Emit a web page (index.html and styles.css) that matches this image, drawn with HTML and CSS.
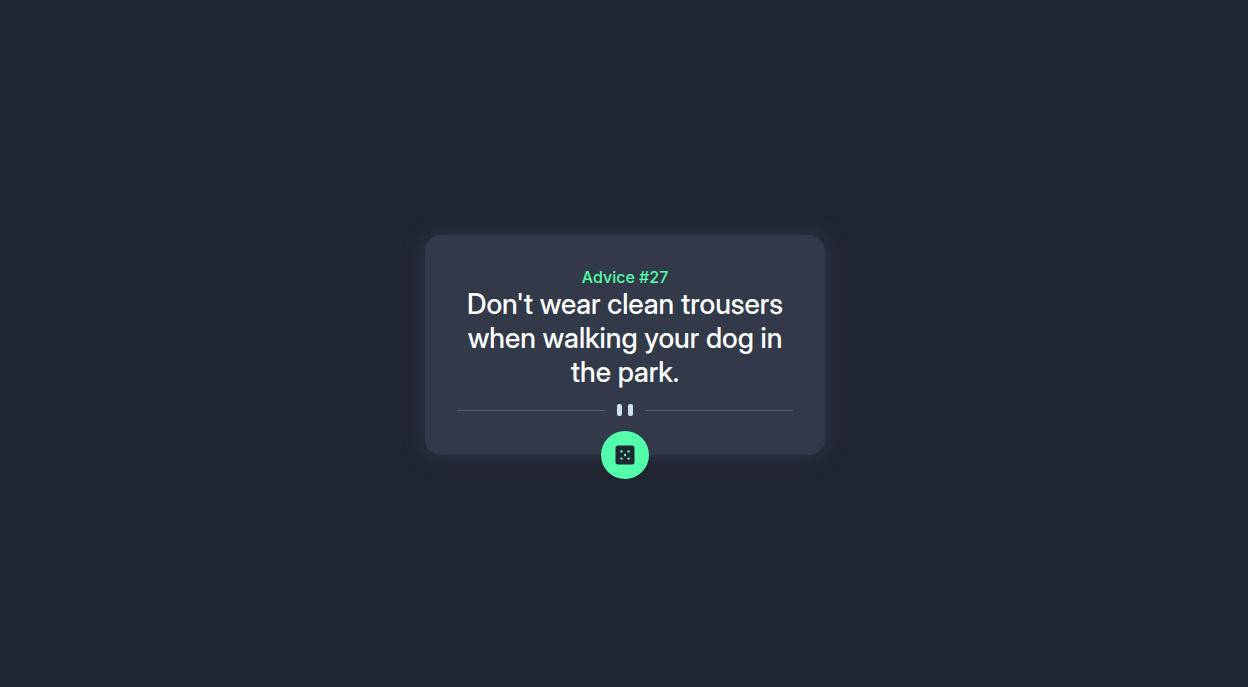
FILE: index.html
```html
<!DOCTYPE html>
<html lang="en">
<head>
<meta charset="utf-8">
<meta name="viewport" content="width=device-width, initial-scale=1">
<title>Advice generator</title>
<link rel="stylesheet" href="styles.css">
</head>
<body>
<main class="card">
  <h1 class="card-title">Advice #27</h1>
  <p class="card-quote">Don't wear clean trousers when walking your dog in the park.</p>
  <svg class="divider" height="16" aria-hidden="true">
    <svg x="0" width="100%" height="16">
      <rect class="divider-line" x="0" y="7" width="44%" height="1"/>
      <rect class="divider-line" x="56%" y="7" width="44%" height="1"/>
    </svg>
    <svg x="50%" overflow="visible">
      <g class="divider-bars"><rect x="-8" y="1" width="5" height="12" rx="2"/><rect x="3" y="1" width="5" height="12" rx="2"/></g>
    </svg>
  </svg>
  <button class="dice" type="button" aria-label="New advice">
    <svg width="24" height="24" viewBox="0 0 24 24" aria-hidden="true">
      <path class="dice-body" d="M5 2.500H19A2.500 2.500 0 0 1 21.500 5V19A2.500 2.500 0 0 1 19 21.500H5A2.500 2.500 0 0 1 2.500 19V5A2.500 2.500 0 0 1 5 2.500Z"/>
      <g class="dice-pips"><circle cx="8.400" cy="8.400" r="1.200"/><circle cx="15.600" cy="8.400" r="1.200"/><circle cx="12" cy="12" r="1.200"/><circle cx="8.400" cy="15.600" r="1.200"/><circle cx="15.600" cy="15.600" r="1.200"/></g>
    </svg>
  </button>
</main>
</body>
</html>
```
FILE: styles.css
```css
* { box-sizing: border-box; }
body {
  margin: 0;
  padding: 2px 0 0 2px;
  min-height: 100vh;
  display: grid;
  place-items: center;
  background: #202631;
  font-family: Inter, sans-serif;
  font-size: 16px;
}
.card {
  position: relative;
  width: 100%;
  max-width: 400px;
  padding: 32px 32px 36px;
  border-radius: 16px;
  background: #323949;
  box-shadow: 0 0 20px #2f3645;
  text-align: center;
}
.card-title {
  margin: 0;
  font-size: 16px;
  line-height: 20px;
  font-weight: 500;
  color: #53ffab;
}
.card-quote {
  margin: 0 0 14px;
  font-family: "Inter Display", Inter, sans-serif;
  font-size: 28px;
  font-weight: 500;
  line-height: 34px;
  color: #fff;
}
.divider { display: block; width: 100%; }
.divider-line { fill: #4f5d74; }
.divider-bars { fill: #cee3e9; }
.dice {
  position: absolute;
  left: 50%;
  bottom: 0;
  transform: translate(-50%, 50%);
  display: grid;
  place-items: center;
  width: 48px;
  height: 48px;
  padding: 0;
  border: 0;
  border-radius: 50%;
  background: #53ffab;
  cursor: pointer;
}
.dice-body { fill: #202733; }
.dice-pips { fill: #53ffab; }
```
